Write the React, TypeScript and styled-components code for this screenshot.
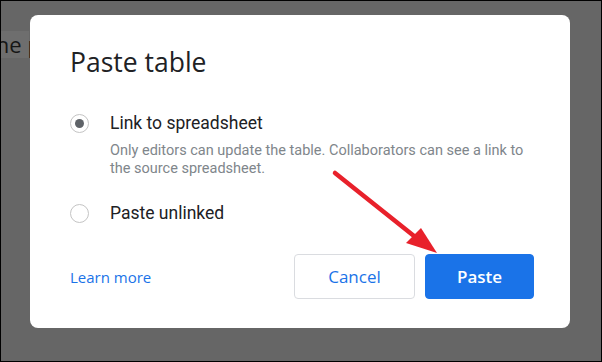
import styled, { createGlobalStyle } from "styled-components";

const GlobalStyle = createGlobalStyle`
  html, body {
    margin: 0;
    padding: 0;
    background: #666666;
  }
  * {
    box-sizing: border-box;
  }
`;

const Page = styled.div`
  position: relative;
  width: 602px;
  height: 362px;
  background: #666666;
  border: 1px solid #000;
  overflow: hidden;
  font-family: Roboto, "Liberation Sans", sans-serif;
`;

const DocLine = styled.div`
  margin-top: 30px;
  margin-left: -13px;
  width: 41px;
  height: 27px;
  background: #6e6e6e;
  font-family: "Open Sans", sans-serif;
  font-size: 22px;
  line-height: 27px;
  color: #161616;
  white-space: nowrap;
`;

const Dialog = styled.div`
  position: absolute;
  left: 29px;
  top: 14px;
  width: 540px;
  height: 313px;
  background: #fff;
  border-radius: 8px;
  padding: 30px 36px 29px 40px;
  display: flex;
  flex-direction: column;
`;

const Title = styled.h1`
  margin: 0;
  font-family: "Open Sans", sans-serif;
  font-weight: 400;
  font-size: 26.5px;
  line-height: 34px;
  color: #202124;
`;

const Options = styled.div`
  margin-top: 32px;
  display: flex;
  flex-direction: column;
  gap: 23px;
`;

const Option = styled.label`
  display: grid;
  grid-template-columns: 40px 1fr;
  align-items: start;
`;

const Radio = styled.span<{ $checked?: boolean }>`
  margin-top: 3px;
  width: 19px;
  height: 19px;
  border-radius: 50%;
  border: 1.5px solid #c4c4c4;
  display: grid;
  place-content: center;

  &::after {
    content: "";
    display: ${(p) => (p.$checked ? "block" : "none")};
    width: 9px;
    height: 9px;
    border-radius: 50%;
    background: #5f6368;
  }
`;

const OptionText = styled.div`
  display: flex;
  flex-direction: column;
  gap: 7px;
`;

const Label = styled.div`
  font-size: 17.5px;
  line-height: 24px;
  color: #202124;
`;

const Hint = styled.div`
  font-size: 14.5px;
  line-height: 18px;
  color: #80868b;
  max-width: 425px;
`;

const Footer = styled.div`
  margin-top: auto;
  display: flex;
  align-items: center;
  gap: 10px;
`;

const LearnMore = styled.a`
  margin-right: auto;
  font-family: "Open Sans", sans-serif;
  font-size: 15px;
  color: #1a73e8;
  text-decoration: none;
`;

const Button = styled.button<{ $primary?: boolean }>`
  height: 45px;
  padding: 0;
  width: ${(p) => (p.$primary ? "109px" : "121px")};
  border-radius: 4px;
  border: 1px solid ${(p) => (p.$primary ? "#1a73e8" : "#dadce0")};
  background: ${(p) => (p.$primary ? "#1a73e8" : "#fff")};
  color: ${(p) => (p.$primary ? "#fff" : "#1a73e8")};
  font-family: "Open Sans", sans-serif;
  font-weight: ${(p) => (p.$primary ? 600 : 500)};
  font-size: 17px;
`;

const Arrow = styled.svg`
  position: absolute;
  left: 325px;
  top: 165px;
  width: 120px;
  height: 95px;
  pointer-events: none;
`;

export default function App() {
  return (
    <>
      <GlobalStyle />
      <Page>
        <DocLine>the p</DocLine>
        <Dialog>
          <Title>Paste table</Title>
          <Options>
            <Option>
              <Radio $checked />
              <OptionText>
                <Label>Link to spreadsheet</Label>
                <Hint>
                  Only editors can update the table. Collaborators can see a link to
                  the source spreadsheet.
                </Hint>
              </OptionText>
            </Option>
            <Option>
              <Radio />
              <OptionText>
                <Label>Paste unlinked</Label>
              </OptionText>
            </Option>
          </Options>
          <Footer>
            <LearnMore href="#">Learn more</LearnMore>
            <Button>Cancel</Button>
            <Button $primary>Paste</Button>
          </Footer>
        </Dialog>
        <Arrow viewBox="0 0 120 95">
          <line x1="9" y1="7" x2="88" y2="70" stroke="#e8212b" strokeWidth="4.5" strokeLinecap="round" />
          <polygon points="80,77 95,62 111,87" fill="#e8212b" />
        </Arrow>
      </Page>
    </>
  );
}
